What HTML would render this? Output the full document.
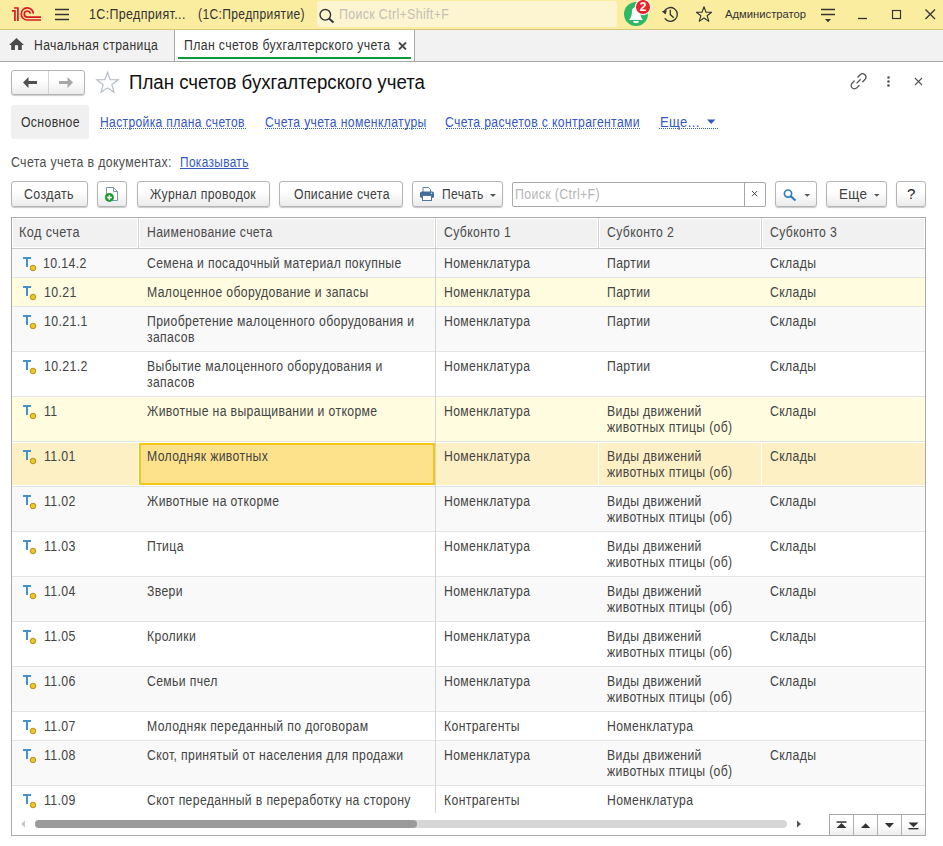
<!DOCTYPE html>
<html><head><meta charset="utf-8">
<style>
*{margin:0;padding:0;box-sizing:border-box}
html,body{width:943px;height:846px;overflow:hidden;background:#fff;font-family:"Liberation Sans",sans-serif;font-size:14px;color:#333}
.a{position:absolute;white-space:nowrap;transform-origin:0 0}
.btn{position:absolute;height:26px;border:1px solid #b4b4b4;border-radius:3px;background:linear-gradient(#fff 40%,#ebebeb);box-shadow:0 1px 1px rgba(0,0,0,.22)}
.dot{border-bottom:1px dotted #3a5fc4}
</style></head><body>

<div class="a" style="left:0;top:0;width:943px;height:30px;background:#fbeda0;border-bottom:1px solid #d4c47c"></div>
<svg class="a" style="left:0;top:0" width="80" height="29" viewBox="0 0 80 29">
  <g fill="none" stroke="#da1a22" stroke-width="1.7">
    <path d="M33.3,13.6 A6.05,6.05 0 1 0 27.2,20 L41,20"/>
    <path d="M30.3,13.6 A3.05,3.05 0 1 0 27.2,17.1 L41,17.1"/>
    <path d="M17.9,7.2 V20.9 M14,8 H18.75 M14.95,10.1 V20.9 M12,10.9 H15.8"/>
  </g>
  <g stroke="#333" stroke-width="1.3"><path d="M55,9.5 H69 M55,14.5 H69 M55,19.5 H69"/></g>
</svg>
<div class="a" style="left:89.0px;top:6px;font-size:14px;line-height:16px;color:#333;transform:scaleX(0.8882);letter-spacing:0.42px;">1С:Предприят...</div>
<div class="a" style="left:198.3px;top:6px;font-size:14px;line-height:16px;color:#333;transform:scaleX(0.8621);letter-spacing:0.42px;">(1С:Предприятие)</div>
<div class="a" style="left:317px;top:1px;width:300px;height:26px;background:#fdf5d2;border-radius:3px"></div>
<svg class="a" style="left:317px;top:1px" width="22" height="26" viewBox="0 0 22 26">
  <circle cx="8.3" cy="13.8" r="5.3" fill="none" stroke="#333" stroke-width="1.4"/>
  <path d="M12,17.5 L16.5,21.5" stroke="#333" stroke-width="2"/>
</svg>
<div class="a" style="left:339px;top:6px;font-size:14px;line-height:16px;color:#c3bfb2;transform:scaleX(0.8816);letter-spacing:0.42px;">Поиск Ctrl+Shift+F</div>
<svg class="a" style="left:620px;top:0" width="70" height="29" viewBox="620 0 70 29">
  <circle cx="636" cy="14" r="12" fill="#2db866"/>
  <path d="M629,20 C631,18 632,14 632,11 C632,8 634,7 636,7 C638,7 640,8 640,11 C640,14 641,18 643,20 Z" fill="#fff"/>
  <path d="M633.2,21 A2.8,2.2 0 0 0 638.8,21 Z" fill="#fff"/>
  <circle cx="643" cy="7" r="7.6" fill="#ea2228" stroke="#fff" stroke-width="1.1"/>
  <text x="643" y="11.3" font-family="Liberation Sans" font-weight="bold" font-size="12" fill="#fff" text-anchor="middle">2</text>
  <g fill="none" stroke="#333" stroke-width="1.3">
    <path d="M664.15,11.5 A6.9,6.9 0 1 1 664.75,18.4"/>
    <path d="M670.3,9.8 V14.6 L673.8,17.8"/>
  </g>
  <path d="M661.8,11.3 L666.9,10.2 L665.5,14.4 Z" fill="#333"/>
</svg>
<svg class="a" style="left:690px;top:0" width="30" height="29" viewBox="690 0 30 29">
  <path d="M704,6.8 L706,12.2 L711.6,12.3 L707.1,15.7 L708.8,21.2 L704,18 L699.2,21.2 L700.9,15.7 L696.4,12.3 L702,12.2 Z" fill="none" stroke="#333" stroke-width="1.1" stroke-linejoin="round"/>
</svg>
<div class="a" style="left:725.4px;top:6px;font-size:11.5px;line-height:16px;color:#333;transform:scaleX(0.9778);">Администратор</div>
<svg class="a" style="left:815px;top:0" width="128" height="29" viewBox="815 0 128 29">
  <g stroke="#333" stroke-width="1.3" fill="none">
    <path d="M821,9.5 H835 M821,14.5 H835"/>
    <path d="M858,18.5 H867"/>
    <rect x="892.5" y="10.5" width="8" height="8" stroke-width="1.15"/>
    <path d="M925.5,9.5 L935,19 M935,9.5 L925.5,19"/>
  </g>
  <path d="M825,19 H831 L828,22.2 Z" fill="#333"/>
</svg>
<div class="a" style="left:0;top:30px;width:943px;height:32px;background:#f2f2f2;border-bottom:1px solid #a8a8a8"></div>
<svg class="a" style="left:9px;top:37px" width="16" height="14" viewBox="0 0 16 14">
  <path d="M7.5,1 L15,8 L12.8,8 L12.8,13 L9.1,13 L9.1,8.2 L5.9,8.2 L5.9,13 L2.2,13 L2.2,8 L0,8 Z" fill="#4a4a4a"/>
</svg>
<div class="a" style="left:33.8px;top:37px;font-size:14px;line-height:16px;color:#333;transform:scaleX(0.8677);letter-spacing:0.42px;">Начальная страница</div>
<div class="a" style="left:174px;top:30px;width:1px;height:31px;background:#a8a8a8"></div>
<div class="a" style="left:175px;top:30px;width:239px;height:31px;background:#fff"></div>
<div class="a" style="left:414px;top:30px;width:1px;height:31px;background:#a8a8a8"></div>
<div class="a" style="left:183.9px;top:37px;font-size:14px;line-height:16px;color:#333;transform:scaleX(0.8765);letter-spacing:0.42px;">План счетов бухгалтерского учета</div>
<svg class="a" style="left:397px;top:41px" width="11" height="10" viewBox="0 0 11 10">
  <path d="M2,1.5 L9,8.5 M9,1.5 L2,8.5" stroke="#4a4a4a" stroke-width="1.8"/>
</svg>
<div class="a" style="left:178px;top:57px;width:233px;height:2px;background:#0f9a3a"></div>
<div class="a" style="left:11px;top:70px;width:74px;height:25px;border:1px solid #b4b4b4;border-radius:3px;background:linear-gradient(#fff 40%,#ececec);box-shadow:0 1px 1px rgba(0,0,0,.2)"></div>
<div class="a" style="left:48px;top:71px;width:1px;height:23px;background:#d4d4d4"></div>
<svg class="a" style="left:11px;top:70px" width="74" height="25" viewBox="11 70 74 25">
  <path d="M23,82.5 L28.5,77 L28.5,81 L37,81 L37,84 L28.5,84 L28.5,88 Z" fill="#505050"/>
  <path d="M73,82.5 L67.5,77 L67.5,81 L59,81 L59,84 L67.5,84 L67.5,88 Z" fill="#a8a8a8"/>
</svg>
<svg class="a" style="left:94px;top:69px" width="28" height="26" viewBox="94 69 28 26">
  <path d="M107.5,72.3 L110.2,79.6 L118.2,79.7 L111.8,84.7 L114,92.2 L107.5,87.8 L101,92.2 L103.2,84.7 L96.8,79.7 L104.8,79.6 Z" fill="none" stroke="#b0b8c2" stroke-width="1.1"/>
</svg>
<div class="a" style="left:129.2px;top:71px;font-size:19.5px;line-height:22px;color:#111;transform:scaleX(0.9571);">План счетов бухгалтерского учета</div>
<svg class="a" style="left:845px;top:68px" width="90" height="26" viewBox="845 68 90 26">
  <g fill="none" stroke="#505050" stroke-width="1.25" stroke-linecap="butt">
    <path d="M857.5,77.5 L860.2,74.8 A3.3,3.3 0 0 1 864.9,79.5 L862.3,82.2"/>
    <path d="M859.5,85.2 L856.8,87.9 A3.3,3.3 0 0 1 852.1,83.2 L854.6,80.6"/>
    <path d="M856.6,83.4 L860.6,79.3"/>
  </g>
  <g fill="#555"><circle cx="888.5" cy="77.5" r="1.3"/><circle cx="888.5" cy="81.5" r="1.3"/><circle cx="888.5" cy="85.5" r="1.3"/></g>
  <path d="M915,78 L922,85 M922,78 L915,85" stroke="#555" stroke-width="1.1"/>
</svg>
<div class="a" style="left:11px;top:105px;width:78px;height:34px;background:#f0f0f0;border-radius:3px"></div>
<div class="a" style="left:20.9px;top:114px;font-size:14px;line-height:16px;color:#333;transform:scaleX(0.873);letter-spacing:0.42px;">Основное</div>
<div class="a" style="left:100.4px;top:114px;font-size:14px;line-height:16px;color:#3558c2;transform:scaleX(0.8619);letter-spacing:0.42px;">Настройка плана счетов</div>
<div class="a" style="left:265.2px;top:114px;font-size:14px;line-height:16px;color:#3558c2;transform:scaleX(0.8695);letter-spacing:0.42px;">Счета учета номенклатуры</div>
<div class="a" style="left:444.9px;top:114px;font-size:14px;line-height:16px;color:#3558c2;transform:scaleX(0.8706);letter-spacing:0.42px;">Счета расчетов с контрагентами</div>
<div class="a" style="left:659.5px;top:114px;font-size:14px;line-height:16px;color:#3558c2;transform:scaleX(0.9338);letter-spacing:0.42px;">Еще...</div>
<div class="a" style="left:100px;top:128px;width:146px;height:1px;border-top:1px dotted #3558c2"></div>
<div class="a" style="left:265px;top:128px;width:161px;height:1px;border-top:1px dotted #3558c2"></div>
<div class="a" style="left:446px;top:128px;width:194px;height:1px;border-top:1px dotted #3558c2"></div>
<div class="a" style="left:659px;top:128px;width:59px;height:1px;border-top:1px dotted #3558c2"></div>
<svg class="a" style="left:700px;top:115px" width="20" height="15" viewBox="700 115 20 15"><path d="M707,119.6 H715.4 L711.2,123.9 Z" fill="#3558c2"/></svg>
<div class="a" style="left:10.8px;top:154px;font-size:14px;line-height:16px;color:#4d4d4d;transform:scaleX(0.8788);letter-spacing:0.42px;">Счета учета в документах:</div>
<div class="a" style="left:179.5px;top:154px;font-size:14px;line-height:16px;color:#3558c2;transform:scaleX(0.8473);letter-spacing:0.42px;"><span style="text-decoration:underline">Показывать</span></div>
<div class="btn" style="left:11px;top:181px;width:77px"></div>
<div class="a" style="left:23.8px;top:186px;font-size:14px;line-height:16px;color:#404040;transform:scaleX(0.8892);letter-spacing:0.42px;">Создать</div>
<div class="btn" style="left:97px;top:181px;width:30px"></div>
<svg class="a" style="left:97px;top:181px" width="30" height="25" viewBox="97 181 30 25">
  <path d="M106.5,187.5 H113.5 L117.5,191.5 V200.5 H106.5 Z" fill="#fff" stroke="#7088a2" stroke-width="0.9"/>
  <path d="M113.5,187.5 V191.5 H117.5" fill="none" stroke="#7088a2" stroke-width="0.9"/>
  <circle cx="109.4" cy="197.4" r="4.5" fill="#1c9a30"/>
  <path d="M109.4,194.9 V199.9 M106.9,197.4 H111.9" stroke="#fff" stroke-width="1.5"/>
</svg>
<div class="btn" style="left:137px;top:181px;width:133px"></div>
<div class="a" style="left:150.4px;top:186px;font-size:14px;line-height:16px;color:#404040;transform:scaleX(0.8748);letter-spacing:0.42px;">Журнал проводок</div>
<div class="btn" style="left:279px;top:181px;width:124px"></div>
<div class="a" style="left:293.6px;top:186px;font-size:14px;line-height:16px;color:#404040;transform:scaleX(0.8734);letter-spacing:0.42px;">Описание счета</div>
<div class="btn" style="left:412px;top:181px;width:91px"></div>
<div class="a" style="left:441.5px;top:186px;font-size:14px;line-height:16px;color:#404040;transform:scaleX(0.8617);letter-spacing:0.42px;">Печать</div>
<svg class="a" style="left:412px;top:181px" width="91" height="25" viewBox="412 181 91 25">
  <path d="M423,192 V187.5 H428.5 L430.5,189.5 V192" fill="#fff" stroke="#5a7fa6" stroke-width="1"/>
  <rect x="420" y="191.5" width="14" height="6.5" rx="1.8" fill="#3f6d9c"/>
  <circle cx="431.5" cy="193.3" r="0.8" fill="#cfe0f0"/>
  <rect x="422.5" y="195.5" width="9" height="5" fill="#fff" stroke="#4f76a0" stroke-width="1"/>
  <path d="M490,194 H496 L493,197 Z" fill="#555"/>
</svg>
<div class="a" style="left:512px;top:182px;width:254px;height:25px;border:1px solid #a8a8a8;border-radius:2px;background:#fff"></div>
<div class="a" style="left:744px;top:183px;width:1px;height:23px;background:#a8a8a8"></div>
<svg class="a" style="left:745px;top:183px" width="20" height="23" viewBox="745 183 20 23"><path d="M752,191 L757.2,196.2 M757.2,191 L752,196.2" stroke="#3a3a3a" stroke-width="0.95"/></svg>
<div class="a" style="left:515px;top:186px;font-size:14px;line-height:16px;color:#b4b4b4;transform:scaleX(0.8816);letter-spacing:0.42px;">Поиск (Ctrl+F)</div>
<div class="btn" style="left:775px;top:181px;width:42px"></div>
<svg class="a" style="left:775px;top:181px" width="42" height="25" viewBox="775 181 42 25">
  <circle cx="788" cy="193.6" r="3.6" fill="none" stroke="#2f7fc0" stroke-width="1.7"/>
  <path d="M790.6,196.2 L795.5,200.5" stroke="#2f7fc0" stroke-width="2.2"/>
  <path d="M804.5,194 H810 L807.25,196.8 Z" fill="#555"/>
</svg>
<div class="btn" style="left:826px;top:181px;width:61px"></div>
<div class="a" style="left:838.9px;top:186px;font-size:14px;line-height:16px;color:#404040;transform:scaleX(0.955);letter-spacing:0.42px;">Еще</div>
<svg class="a" style="left:826px;top:181px" width="61" height="25" viewBox="826 181 61 25"><path d="M874,194 H879.5 L876.75,196.8 Z" fill="#555"/></svg>
<div class="btn" style="left:896px;top:181px;width:30px"></div>
<div class="a" style="left:907px;top:186px;font-size:15px;line-height:16px;color:#1a1a1a;transform:scaleX(1);">?</div>
<div class="a" style="left:11px;top:217px;width:915px;height:619px;border:1px solid #a9a9a9;background:#fff"></div>
<div class="a" style="left:12px;top:218px;width:913px;height:30px;background:#f1f1f1"></div>
<div class="a" style="left:12px;top:218px;width:126px;height:30px;border:1px solid #fff"></div>
<div class="a" style="left:138px;top:218px;width:1px;height:30px;background:#d2d2d2"></div>
<div class="a" style="left:19.0px;top:224px;font-size:14px;line-height:16px;color:#4a4a4a;transform:scaleX(0.9083);letter-spacing:0.42px;">Код счета</div>
<div class="a" style="left:139px;top:218px;width:296px;height:30px;border:1px solid #fff"></div>
<div class="a" style="left:435px;top:218px;width:1px;height:30px;background:#d2d2d2"></div>
<div class="a" style="left:147px;top:224px;font-size:14px;line-height:16px;color:#4a4a4a;transform:scaleX(0.8722);letter-spacing:0.42px;">Наименование счета</div>
<div class="a" style="left:436px;top:218px;width:162px;height:30px;border:1px solid #fff"></div>
<div class="a" style="left:598px;top:218px;width:1px;height:30px;background:#d2d2d2"></div>
<div class="a" style="left:444px;top:224px;font-size:14px;line-height:16px;color:#4a4a4a;transform:scaleX(0.8722);letter-spacing:0.42px;">Субконто 1</div>
<div class="a" style="left:599px;top:218px;width:162px;height:30px;border:1px solid #fff"></div>
<div class="a" style="left:761px;top:218px;width:1px;height:30px;background:#d2d2d2"></div>
<div class="a" style="left:607px;top:224px;font-size:14px;line-height:16px;color:#4a4a4a;transform:scaleX(0.8722);letter-spacing:0.42px;">Субконто 2</div>
<div class="a" style="left:762px;top:218px;width:163px;height:30px;border:1px solid #fff"></div>
<div class="a" style="left:770px;top:224px;font-size:14px;line-height:16px;color:#4a4a4a;transform:scaleX(0.8722);letter-spacing:0.42px;">Субконто 3</div>
<div class="a" style="left:12px;top:248px;width:913px;height:1px;background:#c9c9c9"></div>
<div class="a" style="left:12px;top:249px;width:913px;height:28px;background:#f9f9f9"></div>
<div class="a" style="left:12px;top:277px;width:913px;height:1px;background:#e3e3e3"></div>
<svg class="a" style="left:20px;top:257px" width="18" height="16" viewBox="0 0 18 16"><path d="M3,0 H11 V2 H8 V10 H6 V2 H3 Z" fill="#4690cb"/><circle cx="13" cy="11" r="2.8" fill="#efc52c" stroke="#a88a12" stroke-width="0.9"/></svg>
<div class="a" style="left:43.4px;top:255px;font-size:14px;line-height:16px;color:#444444;transform:scaleX(0.8795);letter-spacing:0.42px;">10.14.2</div>
<div class="a" style="left:146.5px;top:255px;font-size:14px;line-height:16px;color:#444444;transform:scaleX(0.8688);letter-spacing:0.42px;">Семена и посадочный материал покупные</div>
<div class="a" style="left:443.5px;top:255px;font-size:14px;line-height:16px;color:#444444;transform:scaleX(0.8722);letter-spacing:0.42px;">Номенклатура</div>
<div class="a" style="left:606.5px;top:255px;font-size:14px;line-height:16px;color:#444444;transform:scaleX(0.8722);letter-spacing:0.42px;">Партии</div>
<div class="a" style="left:769.5px;top:255px;font-size:14px;line-height:16px;color:#444444;transform:scaleX(0.8722);letter-spacing:0.42px;">Склады</div>
<div class="a" style="left:12px;top:278px;width:913px;height:28px;background:#fffcdf"></div>
<div class="a" style="left:12px;top:306px;width:913px;height:1px;background:#e3e3e3"></div>
<svg class="a" style="left:20px;top:286px" width="18" height="16" viewBox="0 0 18 16"><path d="M3,0 H11 V2 H8 V10 H6 V2 H3 Z" fill="#4690cb"/><circle cx="13" cy="11" r="2.8" fill="#efc52c" stroke="#a88a12" stroke-width="0.9"/></svg>
<div class="a" style="left:43.6px;top:284px;font-size:14px;line-height:16px;color:#444444;transform:scaleX(0.8816);letter-spacing:0.42px;">10.21</div>
<div class="a" style="left:146.5px;top:284px;font-size:14px;line-height:16px;color:#444444;transform:scaleX(0.8722);letter-spacing:0.42px;">Малоценное оборудование и запасы</div>
<div class="a" style="left:443.5px;top:284px;font-size:14px;line-height:16px;color:#444444;transform:scaleX(0.8722);letter-spacing:0.42px;">Номенклатура</div>
<div class="a" style="left:606.5px;top:284px;font-size:14px;line-height:16px;color:#444444;transform:scaleX(0.8722);letter-spacing:0.42px;">Партии</div>
<div class="a" style="left:769.5px;top:284px;font-size:14px;line-height:16px;color:#444444;transform:scaleX(0.8722);letter-spacing:0.42px;">Склады</div>
<div class="a" style="left:12px;top:307px;width:913px;height:44px;background:#f9f9f9"></div>
<div class="a" style="left:12px;top:351px;width:913px;height:1px;background:#e3e3e3"></div>
<svg class="a" style="left:20px;top:315px" width="18" height="16" viewBox="0 0 18 16"><path d="M3,0 H11 V2 H8 V10 H6 V2 H3 Z" fill="#4690cb"/><circle cx="13" cy="11" r="2.8" fill="#efc52c" stroke="#a88a12" stroke-width="0.9"/></svg>
<div class="a" style="left:43.6px;top:313px;font-size:14px;line-height:16px;color:#444444;transform:scaleX(0.8816);letter-spacing:0.42px;">10.21.1</div>
<div class="a" style="left:146.5px;top:313px;font-size:14px;line-height:16px;color:#444444;transform:scaleX(0.8722);letter-spacing:0.42px;">Приобретение малоценного оборудования и<br>запасов</div>
<div class="a" style="left:443.5px;top:313px;font-size:14px;line-height:16px;color:#444444;transform:scaleX(0.8722);letter-spacing:0.42px;">Номенклатура</div>
<div class="a" style="left:606.5px;top:313px;font-size:14px;line-height:16px;color:#444444;transform:scaleX(0.8722);letter-spacing:0.42px;">Партии</div>
<div class="a" style="left:769.5px;top:313px;font-size:14px;line-height:16px;color:#444444;transform:scaleX(0.8722);letter-spacing:0.42px;">Склады</div>
<div class="a" style="left:12px;top:352px;width:913px;height:44px;background:#ffffff"></div>
<div class="a" style="left:12px;top:396px;width:913px;height:1px;background:#e3e3e3"></div>
<svg class="a" style="left:20px;top:360px" width="18" height="16" viewBox="0 0 18 16"><path d="M3,0 H11 V2 H8 V10 H6 V2 H3 Z" fill="#4690cb"/><circle cx="13" cy="11" r="2.8" fill="#efc52c" stroke="#a88a12" stroke-width="0.9"/></svg>
<div class="a" style="left:43.6px;top:358px;font-size:14px;line-height:16px;color:#444444;transform:scaleX(0.8816);letter-spacing:0.42px;">10.21.2</div>
<div class="a" style="left:146.5px;top:358px;font-size:14px;line-height:16px;color:#444444;transform:scaleX(0.8722);letter-spacing:0.42px;">Выбытие малоценного оборудования и<br>запасов</div>
<div class="a" style="left:443.5px;top:358px;font-size:14px;line-height:16px;color:#444444;transform:scaleX(0.8722);letter-spacing:0.42px;">Номенклатура</div>
<div class="a" style="left:606.5px;top:358px;font-size:14px;line-height:16px;color:#444444;transform:scaleX(0.8722);letter-spacing:0.42px;">Партии</div>
<div class="a" style="left:769.5px;top:358px;font-size:14px;line-height:16px;color:#444444;transform:scaleX(0.8722);letter-spacing:0.42px;">Склады</div>
<div class="a" style="left:12px;top:397px;width:913px;height:44px;background:#fffcdf"></div>
<div class="a" style="left:12px;top:441px;width:913px;height:1px;background:#e3e3e3"></div>
<svg class="a" style="left:20px;top:405px" width="18" height="16" viewBox="0 0 18 16"><path d="M3,0 H11 V2 H8 V10 H6 V2 H3 Z" fill="#4690cb"/><circle cx="13" cy="11" r="2.8" fill="#efc52c" stroke="#a88a12" stroke-width="0.9"/></svg>
<div class="a" style="left:43.6px;top:403px;font-size:14px;line-height:16px;color:#444444;transform:scaleX(0.8816);letter-spacing:0.42px;">11</div>
<div class="a" style="left:146.5px;top:403px;font-size:14px;line-height:16px;color:#444444;transform:scaleX(0.8722);letter-spacing:0.42px;">Животные на выращивании и откорме</div>
<div class="a" style="left:443.5px;top:403px;font-size:14px;line-height:16px;color:#444444;transform:scaleX(0.8722);letter-spacing:0.42px;">Номенклатура</div>
<div class="a" style="left:606.5px;top:403px;font-size:14px;line-height:16px;color:#444444;transform:scaleX(0.8722);letter-spacing:0.42px;">Виды движений<br>животных птицы (об)</div>
<div class="a" style="left:769.5px;top:403px;font-size:14px;line-height:16px;color:#444444;transform:scaleX(0.8722);letter-spacing:0.42px;">Склады</div>
<div class="a" style="left:12px;top:442px;width:913px;height:44px;background:#fef0c5"></div>
<div class="a" style="left:12px;top:486px;width:913px;height:1px;background:#e3e3e3"></div>
<div class="a" style="left:12px;top:442px;width:913px;height:1px;background:#fff"></div>
<div class="a" style="left:138px;top:442px;width:1px;height:44px;background:#fff"></div>
<div class="a" style="left:598px;top:442px;width:1px;height:44px;background:#fff"></div>
<div class="a" style="left:761px;top:442px;width:1px;height:44px;background:#fff"></div>
<div class="a" style="left:12px;top:485px;width:913px;height:1px;background:#fff"></div>
<div class="a" style="left:139px;top:443px;width:296px;height:42px;background:#fde28b;border:2px solid #f5c518"></div>
<svg class="a" style="left:20px;top:450px" width="18" height="16" viewBox="0 0 18 16"><path d="M3,0 H11 V2 H8 V10 H6 V2 H3 Z" fill="#4690cb"/><circle cx="13" cy="11" r="2.8" fill="#efc52c" stroke="#a88a12" stroke-width="0.9"/></svg>
<div class="a" style="left:43.6px;top:448px;font-size:14px;line-height:16px;color:#444444;transform:scaleX(0.8816);letter-spacing:0.42px;">11.01</div>
<div class="a" style="left:146.5px;top:448px;font-size:14px;line-height:16px;color:#444444;transform:scaleX(0.8722);letter-spacing:0.42px;">Молодняк животных</div>
<div class="a" style="left:443.5px;top:448px;font-size:14px;line-height:16px;color:#444444;transform:scaleX(0.8722);letter-spacing:0.42px;">Номенклатура</div>
<div class="a" style="left:606.5px;top:448px;font-size:14px;line-height:16px;color:#444444;transform:scaleX(0.8722);letter-spacing:0.42px;">Виды движений<br>животных птицы (об)</div>
<div class="a" style="left:769.5px;top:448px;font-size:14px;line-height:16px;color:#444444;transform:scaleX(0.8722);letter-spacing:0.42px;">Склады</div>
<div class="a" style="left:12px;top:487px;width:913px;height:44px;background:#f9f9f9"></div>
<div class="a" style="left:12px;top:531px;width:913px;height:1px;background:#e3e3e3"></div>
<svg class="a" style="left:20px;top:495px" width="18" height="16" viewBox="0 0 18 16"><path d="M3,0 H11 V2 H8 V10 H6 V2 H3 Z" fill="#4690cb"/><circle cx="13" cy="11" r="2.8" fill="#efc52c" stroke="#a88a12" stroke-width="0.9"/></svg>
<div class="a" style="left:43.6px;top:493px;font-size:14px;line-height:16px;color:#444444;transform:scaleX(0.8816);letter-spacing:0.42px;">11.02</div>
<div class="a" style="left:146.5px;top:493px;font-size:14px;line-height:16px;color:#444444;transform:scaleX(0.8722);letter-spacing:0.42px;">Животные на откорме</div>
<div class="a" style="left:443.5px;top:493px;font-size:14px;line-height:16px;color:#444444;transform:scaleX(0.8722);letter-spacing:0.42px;">Номенклатура</div>
<div class="a" style="left:606.5px;top:493px;font-size:14px;line-height:16px;color:#444444;transform:scaleX(0.8722);letter-spacing:0.42px;">Виды движений<br>животных птицы (об)</div>
<div class="a" style="left:769.5px;top:493px;font-size:14px;line-height:16px;color:#444444;transform:scaleX(0.8722);letter-spacing:0.42px;">Склады</div>
<div class="a" style="left:12px;top:532px;width:913px;height:44px;background:#ffffff"></div>
<div class="a" style="left:12px;top:576px;width:913px;height:1px;background:#e3e3e3"></div>
<svg class="a" style="left:20px;top:540px" width="18" height="16" viewBox="0 0 18 16"><path d="M3,0 H11 V2 H8 V10 H6 V2 H3 Z" fill="#4690cb"/><circle cx="13" cy="11" r="2.8" fill="#efc52c" stroke="#a88a12" stroke-width="0.9"/></svg>
<div class="a" style="left:43.6px;top:538px;font-size:14px;line-height:16px;color:#444444;transform:scaleX(0.8816);letter-spacing:0.42px;">11.03</div>
<div class="a" style="left:146.5px;top:538px;font-size:14px;line-height:16px;color:#444444;transform:scaleX(0.8722);letter-spacing:0.42px;">Птица</div>
<div class="a" style="left:443.5px;top:538px;font-size:14px;line-height:16px;color:#444444;transform:scaleX(0.8722);letter-spacing:0.42px;">Номенклатура</div>
<div class="a" style="left:606.5px;top:538px;font-size:14px;line-height:16px;color:#444444;transform:scaleX(0.8722);letter-spacing:0.42px;">Виды движений<br>животных птицы (об)</div>
<div class="a" style="left:769.5px;top:538px;font-size:14px;line-height:16px;color:#444444;transform:scaleX(0.8722);letter-spacing:0.42px;">Склады</div>
<div class="a" style="left:12px;top:577px;width:913px;height:44px;background:#f9f9f9"></div>
<div class="a" style="left:12px;top:621px;width:913px;height:1px;background:#e3e3e3"></div>
<svg class="a" style="left:20px;top:585px" width="18" height="16" viewBox="0 0 18 16"><path d="M3,0 H11 V2 H8 V10 H6 V2 H3 Z" fill="#4690cb"/><circle cx="13" cy="11" r="2.8" fill="#efc52c" stroke="#a88a12" stroke-width="0.9"/></svg>
<div class="a" style="left:43.6px;top:583px;font-size:14px;line-height:16px;color:#444444;transform:scaleX(0.8816);letter-spacing:0.42px;">11.04</div>
<div class="a" style="left:146.5px;top:583px;font-size:14px;line-height:16px;color:#444444;transform:scaleX(0.8722);letter-spacing:0.42px;">Звери</div>
<div class="a" style="left:443.5px;top:583px;font-size:14px;line-height:16px;color:#444444;transform:scaleX(0.8722);letter-spacing:0.42px;">Номенклатура</div>
<div class="a" style="left:606.5px;top:583px;font-size:14px;line-height:16px;color:#444444;transform:scaleX(0.8722);letter-spacing:0.42px;">Виды движений<br>животных птицы (об)</div>
<div class="a" style="left:769.5px;top:583px;font-size:14px;line-height:16px;color:#444444;transform:scaleX(0.8722);letter-spacing:0.42px;">Склады</div>
<div class="a" style="left:12px;top:622px;width:913px;height:44px;background:#ffffff"></div>
<div class="a" style="left:12px;top:666px;width:913px;height:1px;background:#e3e3e3"></div>
<svg class="a" style="left:20px;top:630px" width="18" height="16" viewBox="0 0 18 16"><path d="M3,0 H11 V2 H8 V10 H6 V2 H3 Z" fill="#4690cb"/><circle cx="13" cy="11" r="2.8" fill="#efc52c" stroke="#a88a12" stroke-width="0.9"/></svg>
<div class="a" style="left:43.6px;top:628px;font-size:14px;line-height:16px;color:#444444;transform:scaleX(0.8816);letter-spacing:0.42px;">11.05</div>
<div class="a" style="left:146.5px;top:628px;font-size:14px;line-height:16px;color:#444444;transform:scaleX(0.8722);letter-spacing:0.42px;">Кролики</div>
<div class="a" style="left:443.5px;top:628px;font-size:14px;line-height:16px;color:#444444;transform:scaleX(0.8722);letter-spacing:0.42px;">Номенклатура</div>
<div class="a" style="left:606.5px;top:628px;font-size:14px;line-height:16px;color:#444444;transform:scaleX(0.8722);letter-spacing:0.42px;">Виды движений<br>животных птицы (об)</div>
<div class="a" style="left:769.5px;top:628px;font-size:14px;line-height:16px;color:#444444;transform:scaleX(0.8722);letter-spacing:0.42px;">Склады</div>
<div class="a" style="left:12px;top:667px;width:913px;height:44px;background:#f9f9f9"></div>
<div class="a" style="left:12px;top:711px;width:913px;height:1px;background:#e3e3e3"></div>
<svg class="a" style="left:20px;top:675px" width="18" height="16" viewBox="0 0 18 16"><path d="M3,0 H11 V2 H8 V10 H6 V2 H3 Z" fill="#4690cb"/><circle cx="13" cy="11" r="2.8" fill="#efc52c" stroke="#a88a12" stroke-width="0.9"/></svg>
<div class="a" style="left:43.6px;top:673px;font-size:14px;line-height:16px;color:#444444;transform:scaleX(0.8816);letter-spacing:0.42px;">11.06</div>
<div class="a" style="left:146.5px;top:673px;font-size:14px;line-height:16px;color:#444444;transform:scaleX(0.8722);letter-spacing:0.42px;">Семьи пчел</div>
<div class="a" style="left:443.5px;top:673px;font-size:14px;line-height:16px;color:#444444;transform:scaleX(0.8722);letter-spacing:0.42px;">Номенклатура</div>
<div class="a" style="left:606.5px;top:673px;font-size:14px;line-height:16px;color:#444444;transform:scaleX(0.8722);letter-spacing:0.42px;">Виды движений<br>животных птицы (об)</div>
<div class="a" style="left:769.5px;top:673px;font-size:14px;line-height:16px;color:#444444;transform:scaleX(0.8722);letter-spacing:0.42px;">Склады</div>
<div class="a" style="left:12px;top:712px;width:913px;height:28px;background:#ffffff"></div>
<div class="a" style="left:12px;top:740px;width:913px;height:1px;background:#e3e3e3"></div>
<svg class="a" style="left:20px;top:720px" width="18" height="16" viewBox="0 0 18 16"><path d="M3,0 H11 V2 H8 V10 H6 V2 H3 Z" fill="#4690cb"/><circle cx="13" cy="11" r="2.8" fill="#efc52c" stroke="#a88a12" stroke-width="0.9"/></svg>
<div class="a" style="left:43.6px;top:718px;font-size:14px;line-height:16px;color:#444444;transform:scaleX(0.8816);letter-spacing:0.42px;">11.07</div>
<div class="a" style="left:146.5px;top:718px;font-size:14px;line-height:16px;color:#444444;transform:scaleX(0.8722);letter-spacing:0.42px;">Молодняк переданный по договорам</div>
<div class="a" style="left:443.5px;top:718px;font-size:14px;line-height:16px;color:#444444;transform:scaleX(0.8722);letter-spacing:0.42px;">Контрагенты</div>
<div class="a" style="left:606.5px;top:718px;font-size:14px;line-height:16px;color:#444444;transform:scaleX(0.8722);letter-spacing:0.42px;">Номенклатура</div>
<div class="a" style="left:12px;top:741px;width:913px;height:44px;background:#f9f9f9"></div>
<div class="a" style="left:12px;top:785px;width:913px;height:1px;background:#e3e3e3"></div>
<svg class="a" style="left:20px;top:749px" width="18" height="16" viewBox="0 0 18 16"><path d="M3,0 H11 V2 H8 V10 H6 V2 H3 Z" fill="#4690cb"/><circle cx="13" cy="11" r="2.8" fill="#efc52c" stroke="#a88a12" stroke-width="0.9"/></svg>
<div class="a" style="left:43.6px;top:747px;font-size:14px;line-height:16px;color:#444444;transform:scaleX(0.8816);letter-spacing:0.42px;">11.08</div>
<div class="a" style="left:146.5px;top:747px;font-size:14px;line-height:16px;color:#444444;transform:scaleX(0.8722);letter-spacing:0.42px;">Скот, принятый от населения для продажи</div>
<div class="a" style="left:443.5px;top:747px;font-size:14px;line-height:16px;color:#444444;transform:scaleX(0.8722);letter-spacing:0.42px;">Номенклатура</div>
<div class="a" style="left:606.5px;top:747px;font-size:14px;line-height:16px;color:#444444;transform:scaleX(0.8722);letter-spacing:0.42px;">Виды движений<br>животных птицы (об)</div>
<div class="a" style="left:769.5px;top:747px;font-size:14px;line-height:16px;color:#444444;transform:scaleX(0.8722);letter-spacing:0.42px;">Склады</div>
<div class="a" style="left:12px;top:786px;width:913px;height:27px;background:#ffffff"></div>
<svg class="a" style="left:20px;top:794px" width="18" height="16" viewBox="0 0 18 16"><path d="M3,0 H11 V2 H8 V10 H6 V2 H3 Z" fill="#4690cb"/><circle cx="13" cy="11" r="2.8" fill="#efc52c" stroke="#a88a12" stroke-width="0.9"/></svg>
<div class="a" style="left:43.6px;top:792px;font-size:14px;line-height:16px;color:#444444;transform:scaleX(0.8816);letter-spacing:0.42px;">11.09</div>
<div class="a" style="left:146.5px;top:792px;font-size:14px;line-height:16px;color:#444444;transform:scaleX(0.8722);letter-spacing:0.42px;">Скот переданный в переработку на сторону</div>
<div class="a" style="left:443.5px;top:792px;font-size:14px;line-height:16px;color:#444444;transform:scaleX(0.8722);letter-spacing:0.42px;">Контрагенты</div>
<div class="a" style="left:606.5px;top:792px;font-size:14px;line-height:16px;color:#444444;transform:scaleX(0.8722);letter-spacing:0.42px;">Номенклатура</div>
<div class="a" style="left:435px;top:249px;width:1px;height:564px;background:#d6d6d6"></div>
<div class="a" style="left:12px;top:813px;width:913px;height:22px;background:#fff"></div>
<svg class="a" style="left:12px;top:814px" width="913" height="21" viewBox="12 814 913 21"><path d="M21,824 L25,820.5 V827.5 Z" fill="#c8c8c8"/><rect x="35" y="820" width="752" height="8" rx="4" fill="#d6d6d6"/><rect x="35" y="820" width="382" height="8" rx="4" fill="#9b9b9b"/><path d="M801,824 L797,820.5 V827.5 Z" fill="#555"/></svg>
<div class="a" style="left:829px;top:814px;width:97px;height:22px;border:1px solid #a9a9a9;border-bottom:none;background:linear-gradient(#fff 40%,#ececec)"></div>
<div class="a" style="left:853px;top:815px;width:1px;height:20px;background:#b0b0b0"></div>
<div class="a" style="left:877px;top:815px;width:1px;height:20px;background:#b0b0b0"></div>
<div class="a" style="left:901px;top:815px;width:1px;height:20px;background:#b0b0b0"></div>
<svg class="a" style="left:829px;top:814px" width="97" height="22" viewBox="829 814 97 22"><g fill="#333"><rect x="836.5" y="821.3" width="10" height="1.5"/><path d="M836.5,828 L841.5,823 L846.5,828 Z"/><path d="M861,828 L865.6,823.2 L870.2,828 Z"/><path d="M884.8,823 L889.4,827.8 L894,823 Z"/><path d="M908.5,822.6 L913.5,827.2 L918.5,822.6 Z"/><rect x="908.5" y="828" width="10" height="1.4"/></g></svg>
<div class="a" style="left:11px;top:835px;width:915px;height:1px;background:#a9a9a9"></div>
</body></html>
